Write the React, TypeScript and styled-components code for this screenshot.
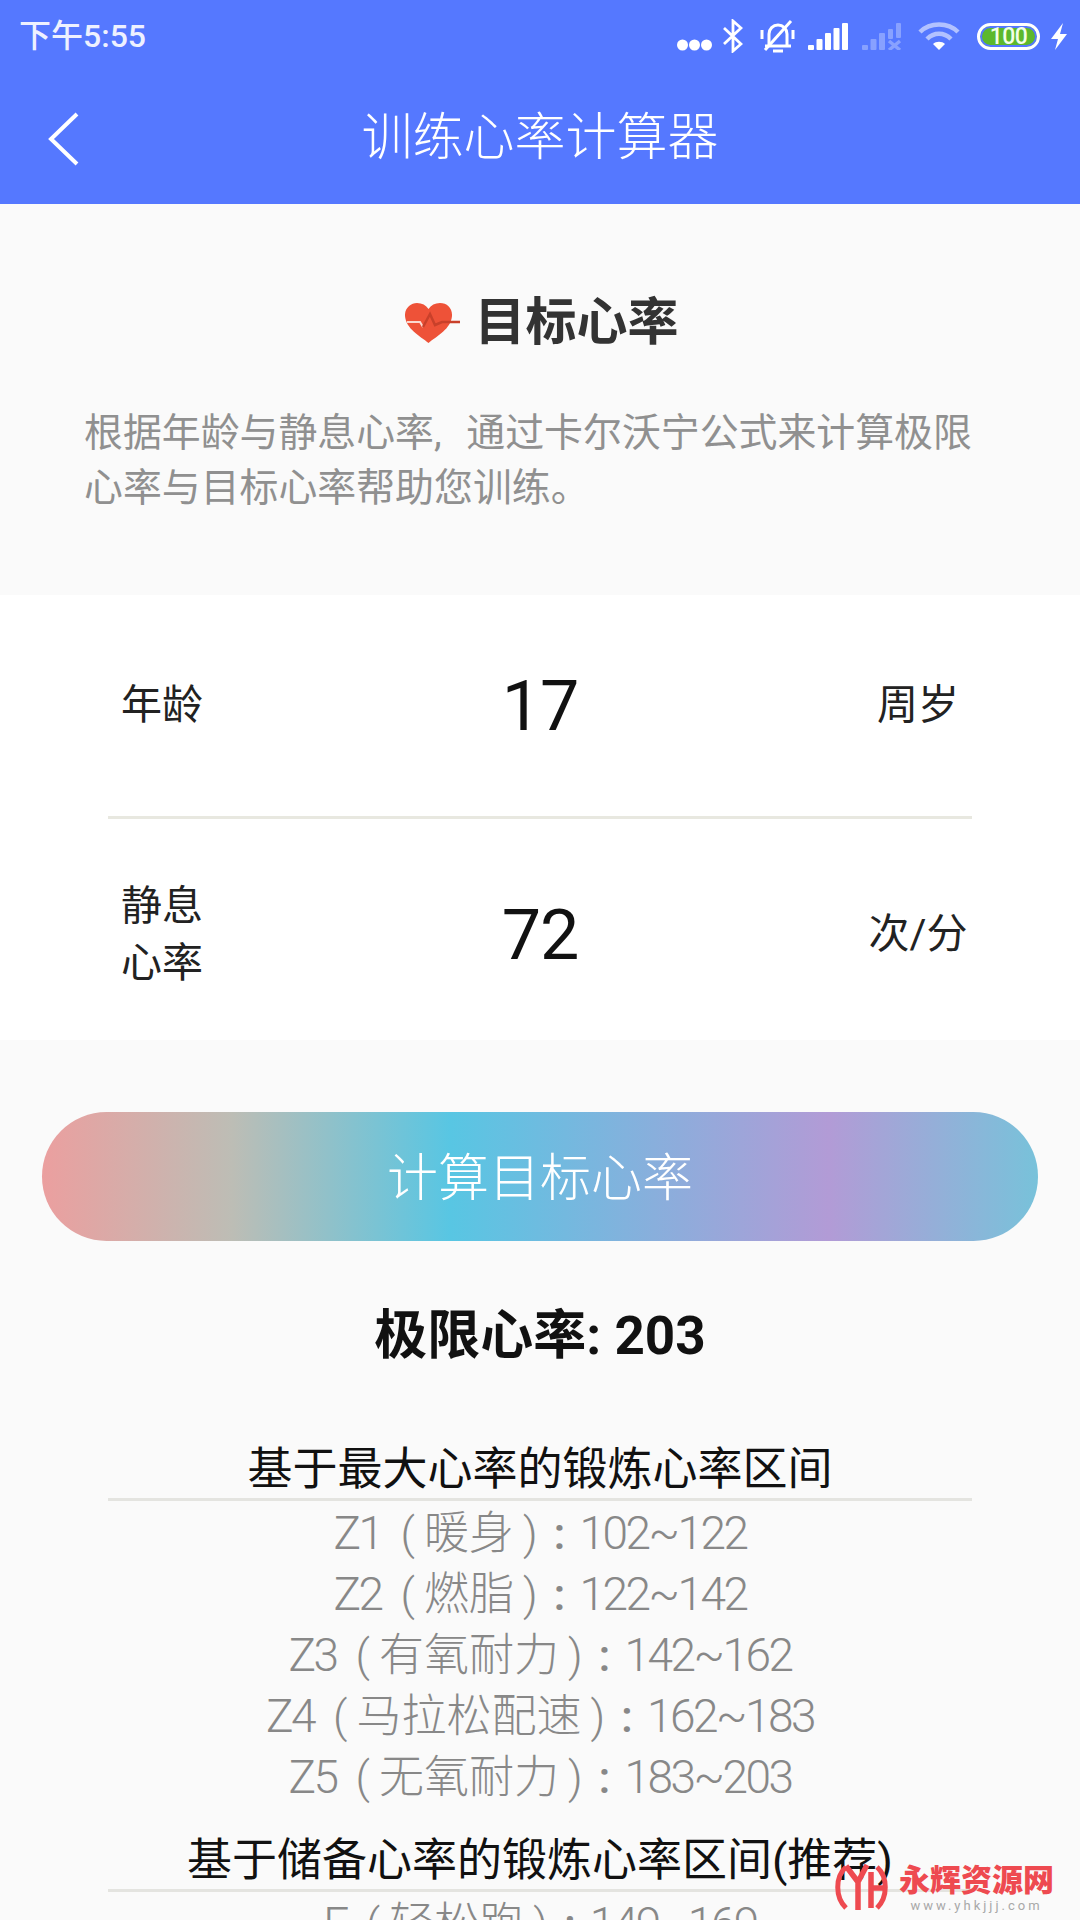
import React from 'react';
import styled, { createGlobalStyle } from 'styled-components';

const CJK = `Roboto, "Noto Sans CJK SC", sans-serif`;

const GlobalStyle = createGlobalStyle`
  html, body {
    margin: 0;
    padding: 0;
    background: #fafafa;
  }
  * {
    box-sizing: border-box;
  }
`;

const Page = styled.div`
  position: relative;
  width: 1080px;
  height: 1920px;
  overflow: hidden;
  background: #fafafa;
  font-family: ${CJK};
`;

const Header = styled.header`
  height: 204px;
  background: #5578ff;
  color: #fff;
  display: flex;
  flex-direction: column;
`;

const StatusBar = styled.div`
  height: 72px;
  padding: 0 12px 0 19px;
  display: flex;
  align-items: center;
  justify-content: space-between;
`;

const Clock = styled.span`
  font-size: 32px;
  font-weight: 500;
  line-height: 36px;
  color: #eef1ff;
`;

const StatusIcons = styled.div`
  display: flex;
  align-items: center;
`;

const StatusGlyph = styled.svg<{ $gap?: number; $drop?: number }>`
  display: block;
  margin-left: ${(p) => p.$gap ?? 0}px;
  margin-top: ${(p) => p.$drop ?? 0}px;
`;

const Battery = styled.span`
  width: 63px;
  height: 27px;
  margin-left: 17px;
  border: 3px solid #fff;
  border-radius: 14px;
  background: #5cb82c;
  box-shadow: inset 0 0 0 2px #5578ff;
  color: #f2ffe8;
  font-size: 23px;
  font-weight: 500;
  line-height: 21px;
  letter-spacing: -0.5px;
  text-align: center;
`;

const NavBar = styled.div`
  flex: 1;
  position: relative;
  display: flex;
  align-items: center;
  justify-content: center;
`;

const BackButton = styled.svg`
  position: absolute;
  left: 47px;
  top: 40px;
`;

const Title = styled.h1`
  margin: 0;
  font-size: 51px;
  font-weight: 300;
  line-height: 60px;
`;

const Intro = styled.section`
  height: 391px;
  padding: 87px 84px 0;
`;

const IntroHeading = styled.div`
  display: flex;
  align-items: center;
  justify-content: center;
  gap: 14px;
  margin-left: 4px;
`;

const IntroTitle = styled.h2`
  margin: 0;
  font-size: 51px;
  font-weight: 700;
  line-height: 64px;
  color: #333;
`;

const IntroText = styled.p`
  margin: 50px 0 0;
  font-size: 38.9px;
  line-height: 55px;
  font-weight: 400;
  word-spacing: 15px;
  color: #909090;
`;

const FormCard = styled.section`
  height: 445px;
  background: #fff;
  padding: 0 108px;
`;

const FormRow = styled.div<{ $height: number; $divider?: boolean; $drop?: number }>`
  height: ${(p) => p.$height}px;
  display: flex;
  align-items: center;
  padding-top: ${(p) => p.$drop ?? 0}px;
  border-bottom: ${(p) => (p.$divider ? '3px solid #e8e8e0' : 'none')};
`;

const RowLabel = styled.div`
  width: 108px;
  padding-left: 13px;
  font-size: 41px;
  line-height: 57px;
  font-weight: 400;
  color: #222;
`;

const RowValue = styled.div`
  flex: 1;
  text-align: center;
  font-size: 70px;
  line-height: 80px;
  font-weight: 400;
  letter-spacing: -1px;
  color: #111;
`;

const RowUnit = styled.div`
  width: 108px;
  text-align: center;
  font-size: 41px;
  line-height: 57px;
  font-weight: 400;
  color: #222;
  white-space: nowrap;
`;

const Results = styled.section`
  padding: 72px 42px 0;
`;

const CalcButton = styled.button`
  display: block;
  width: 100%;
  height: 129px;
  border: 0;
  border-radius: 65px;
  background: linear-gradient(
    90deg,
    #eb9f9f 0%,
    #bdbdb5 19%,
    #58c6e3 41%,
    #b29bd6 79%,
    #78c2da 100%
  );
  color: #fff;
  font-family: ${CJK};
  font-size: 51px;
  font-weight: 300;
  padding: 0 0 5px;
`;

const LimitRate = styled.div`
  margin-top: 62px;
  text-align: center;
  font-size: 53px;
  font-weight: 700;
  line-height: 66px;
  color: #111;
`;

const ZoneGroup = styled.div<{ $top: number }>`
  margin: ${(p) => p.$top}px 66px 0;
  text-align: center;
`;

const ZoneTitle = styled.div`
  font-size: 45px;
  line-height: 56px;
  font-weight: 400;
  color: #111;
  border-bottom: 3px solid #e4e4e0;
  white-space: nowrap;
`;

const ZoneList = styled.div`
  padding-top: 2px;
`;

const ZoneLine = styled.div`
  display: flex;
  align-items: baseline;
  justify-content: center;
  font-size: 45px;
  line-height: 60px;
  font-weight: 300;
  color: #888;
  white-space: nowrap;
`;

const ZoneLatin = styled.span`
  font-size: 46px;
  font-weight: 300;
  letter-spacing: -2.5px;
`;

const ZoneParen = styled.span<{ $closing?: boolean }>`
  margin: ${(p) => (p.$closing ? '0 0 0 9px' : '0 9px 0 19px')};
`;

const ZoneColon = styled.span`
  margin: 0 14px 0 16px;
  font-weight: 500;
`;

const Watermark = styled.div`
  position: absolute;
  left: 835px;
  top: 1860px;
  display: flex;
  align-items: center;
  gap: 11px;
`;

const WatermarkText = styled.div`
  display: flex;
  flex-direction: column;
  align-items: center;
  padding-top: 3px;
`;

const WatermarkName = styled.span`
  font-size: 31px;
  line-height: 36px;
  font-weight: 900;
  color: #ee4a50;
  white-space: nowrap;
`;

const WatermarkUrl = styled.span`
  font-size: 13px;
  line-height: 14px;
  letter-spacing: 3px;
  color: #a8a8a8;
  white-space: nowrap;
`;

type Zone = { zone: string; name: string; range: string };

const firstZones: Zone[] = [
  { zone: 'Z1', name: '暖身', range: '102~122' },
  { zone: 'Z2', name: '燃脂', range: '122~142' },
  { zone: 'Z3', name: '有氧耐力', range: '142~162' },
  { zone: 'Z4', name: '马拉松配速', range: '162~183' },
  { zone: 'Z5', name: '无氧耐力', range: '183~203' },
];

const secondZones: Zone[] = [{ zone: 'E', name: '轻松跑', range: '149~169' }];

const ZoneRow = ({ zone, name, range }: Zone) => (
  <ZoneLine>
    <ZoneLatin>{zone}</ZoneLatin>
    <ZoneParen>(</ZoneParen>
    <span>{name}</span>
    <ZoneParen $closing>)</ZoneParen>
    <ZoneColon>:</ZoneColon>
    <ZoneLatin>{range}</ZoneLatin>
  </ZoneLine>
);

const HeartIcon = () => (
  <svg width="55" height="40" viewBox="0 0 55 40">
    <path
      d="M23.5 40 C15 33 1 26 0 13 C-0.5 5 6 0 12 0 C17 0 21 2 23.5 6 C26 2 30 0 35 0 C42 0 47.5 5 47 13 C46 26 32 33 23.5 40 Z"
      fill="#ee5238"
    />
    <path d="M2 19 H15 L18 24" fill="none" stroke="#fbd9d0" strokeWidth="2" />
    <path d="M18 24 L25 11 L30 22 L37 19 H55" fill="none" stroke="#c9402a" strokeWidth="2.5" />
  </svg>
);

const SignalIcon = ({ off }: { off?: boolean }) => (
  <StatusGlyph
    $gap={off ? 14 : 13}
    width="40"
    height="27"
    viewBox="0 0 40 27"
    fill="#fff"
    opacity={off ? 0.3 : 1}
  >
    <rect x="0" y="22" width="6" height="5" rx="1" />
    <rect x="8.5" y="16" width="6" height="11" rx="1" />
    <rect x="17" y="10" width="6" height="17" rx="1" />
    {off ? (
      <>
        <rect x="26" y="6" width="5" height="10" rx="1" />
        <rect x="34" y="0" width="5" height="15" rx="1" />
        <path d="M27 18 L38 27 M38 18 L27 27" stroke="#fff" strokeWidth="3.5" />
      </>
    ) : (
      <>
        <rect x="25.5" y="5" width="6" height="22" rx="1" />
        <rect x="34" y="0" width="6" height="27" rx="1" />
      </>
    )}
  </StatusGlyph>
);

const StatusIconSet = () => (
  <StatusIcons>
    <StatusGlyph $drop={18} width="35" height="12" viewBox="0 0 35 12" fill="#fff">
      <circle cx="5.5" cy="6" r="5.5" />
      <circle cx="17.5" cy="6" r="5.5" />
      <circle cx="29.5" cy="6" r="5.5" />
    </StatusGlyph>
    <StatusGlyph $gap={11} width="20" height="34" viewBox="0 0 20 34" fill="none" stroke="#fff" strokeWidth="2.8">
      <path d="M1 9 L18 25 L10 32 V2 L18 9 L1 25" />
    </StatusGlyph>
    <StatusGlyph $gap={17} width="35" height="33" viewBox="0 0 35 33" fill="none" stroke="#fff" strokeWidth="3">
      <path d="M9 25 V14 C9 9 13 5 18 5 C23 5 27 9 27 14 V25" />
      <path d="M5 26 H31" />
      <path d="M13 31 H23" />
      <path d="M2 10 V19 M33 10 V19" />
      <path d="M5 30 L31 1" />
    </StatusGlyph>
    <SignalIcon />
    <SignalIcon off />
    <StatusGlyph $gap={16} width="42" height="29" viewBox="0 0 42 29" fill="none" stroke="#fff" strokeWidth="4.5">
      <path d="M2 10 C12 0 30 0 40 10" opacity="0.55" />
      <path d="M9 17 C16 10 26 10 33 17" opacity="0.55" />
      <path d="M15 22 C18 19 24 19 27 22 L21 28 Z" fill="#fff" stroke="none" />
    </StatusGlyph>
    <Battery>100</Battery>
    <StatusGlyph $gap={10} width="18" height="27" viewBox="0 0 18 27" fill="#fff">
      <path d="M13 0 L1 16 H8 L5 27 L17 11 H10 Z" />
    </StatusGlyph>
  </StatusIcons>
);

const App: React.FC = () => {
  return (
    <Page>
      <GlobalStyle />
      <Header>
        <StatusBar>
          <Clock>下午5:55</Clock>
          <StatusIconSet />
        </StatusBar>
        <NavBar>
          <BackButton width="34" height="54" viewBox="0 0 34 54" fill="none" stroke="#fff" strokeWidth="4">
            <path d="M30 2 L4 27 L30 52" />
          </BackButton>
          <Title>训练心率计算器</Title>
        </NavBar>
      </Header>

      <Intro>
        <IntroHeading>
          <HeartIcon />
          <IntroTitle>目标心率</IntroTitle>
        </IntroHeading>
        <IntroText>根据年龄与静息心率, 通过卡尔沃宁公式来计算极限心率与目标心率帮助您训练。</IntroText>
      </Intro>

      <FormCard>
        <FormRow $height={224} $divider>
          <RowLabel>年龄</RowLabel>
          <RowValue>17</RowValue>
          <RowUnit>周岁</RowUnit>
        </FormRow>
        <FormRow $height={221} $drop={10}>
          <RowLabel>静息心率</RowLabel>
          <RowValue>72</RowValue>
          <RowUnit>次/分</RowUnit>
        </FormRow>
      </FormCard>

      <Results>
        <CalcButton>计算目标心率</CalcButton>
        <LimitRate>极限心率: 203</LimitRate>
        <ZoneGroup $top={73}>
          <ZoneTitle>基于最大心率的锻炼心率区间</ZoneTitle>
          <ZoneList>
            {firstZones.map((z) => (
              <ZoneRow key={z.zone} {...z} />
            ))}
          </ZoneList>
        </ZoneGroup>
        <ZoneGroup $top={25}>
          <ZoneTitle>基于储备心率的锻炼心率区间(推荐)</ZoneTitle>
          <ZoneList>
            {secondZones.map((z) => (
              <ZoneRow key={z.zone} {...z} />
            ))}
          </ZoneList>
        </ZoneGroup>
      </Results>

      <Watermark>
        <svg width="53" height="46" viewBox="0 0 53 46" fill="none" stroke="#ee4a50" strokeWidth="5">
          <path d="M11 3 C0 13 0 33 11 44" />
          <path d="M42 3 C53 13 53 33 42 44" />
          <path d="M11 2 L23 18 V46 M32 1 L23 18" strokeWidth="5.5" />
          <path d="M36 8 V44 M36 24 H50" strokeWidth="5.5" />
        </svg>
        <WatermarkText>
          <WatermarkName>永辉资源网</WatermarkName>
          <WatermarkUrl>www.yhkjjj.com</WatermarkUrl>
        </WatermarkText>
      </Watermark>
    </Page>
  );
};

export default App;
